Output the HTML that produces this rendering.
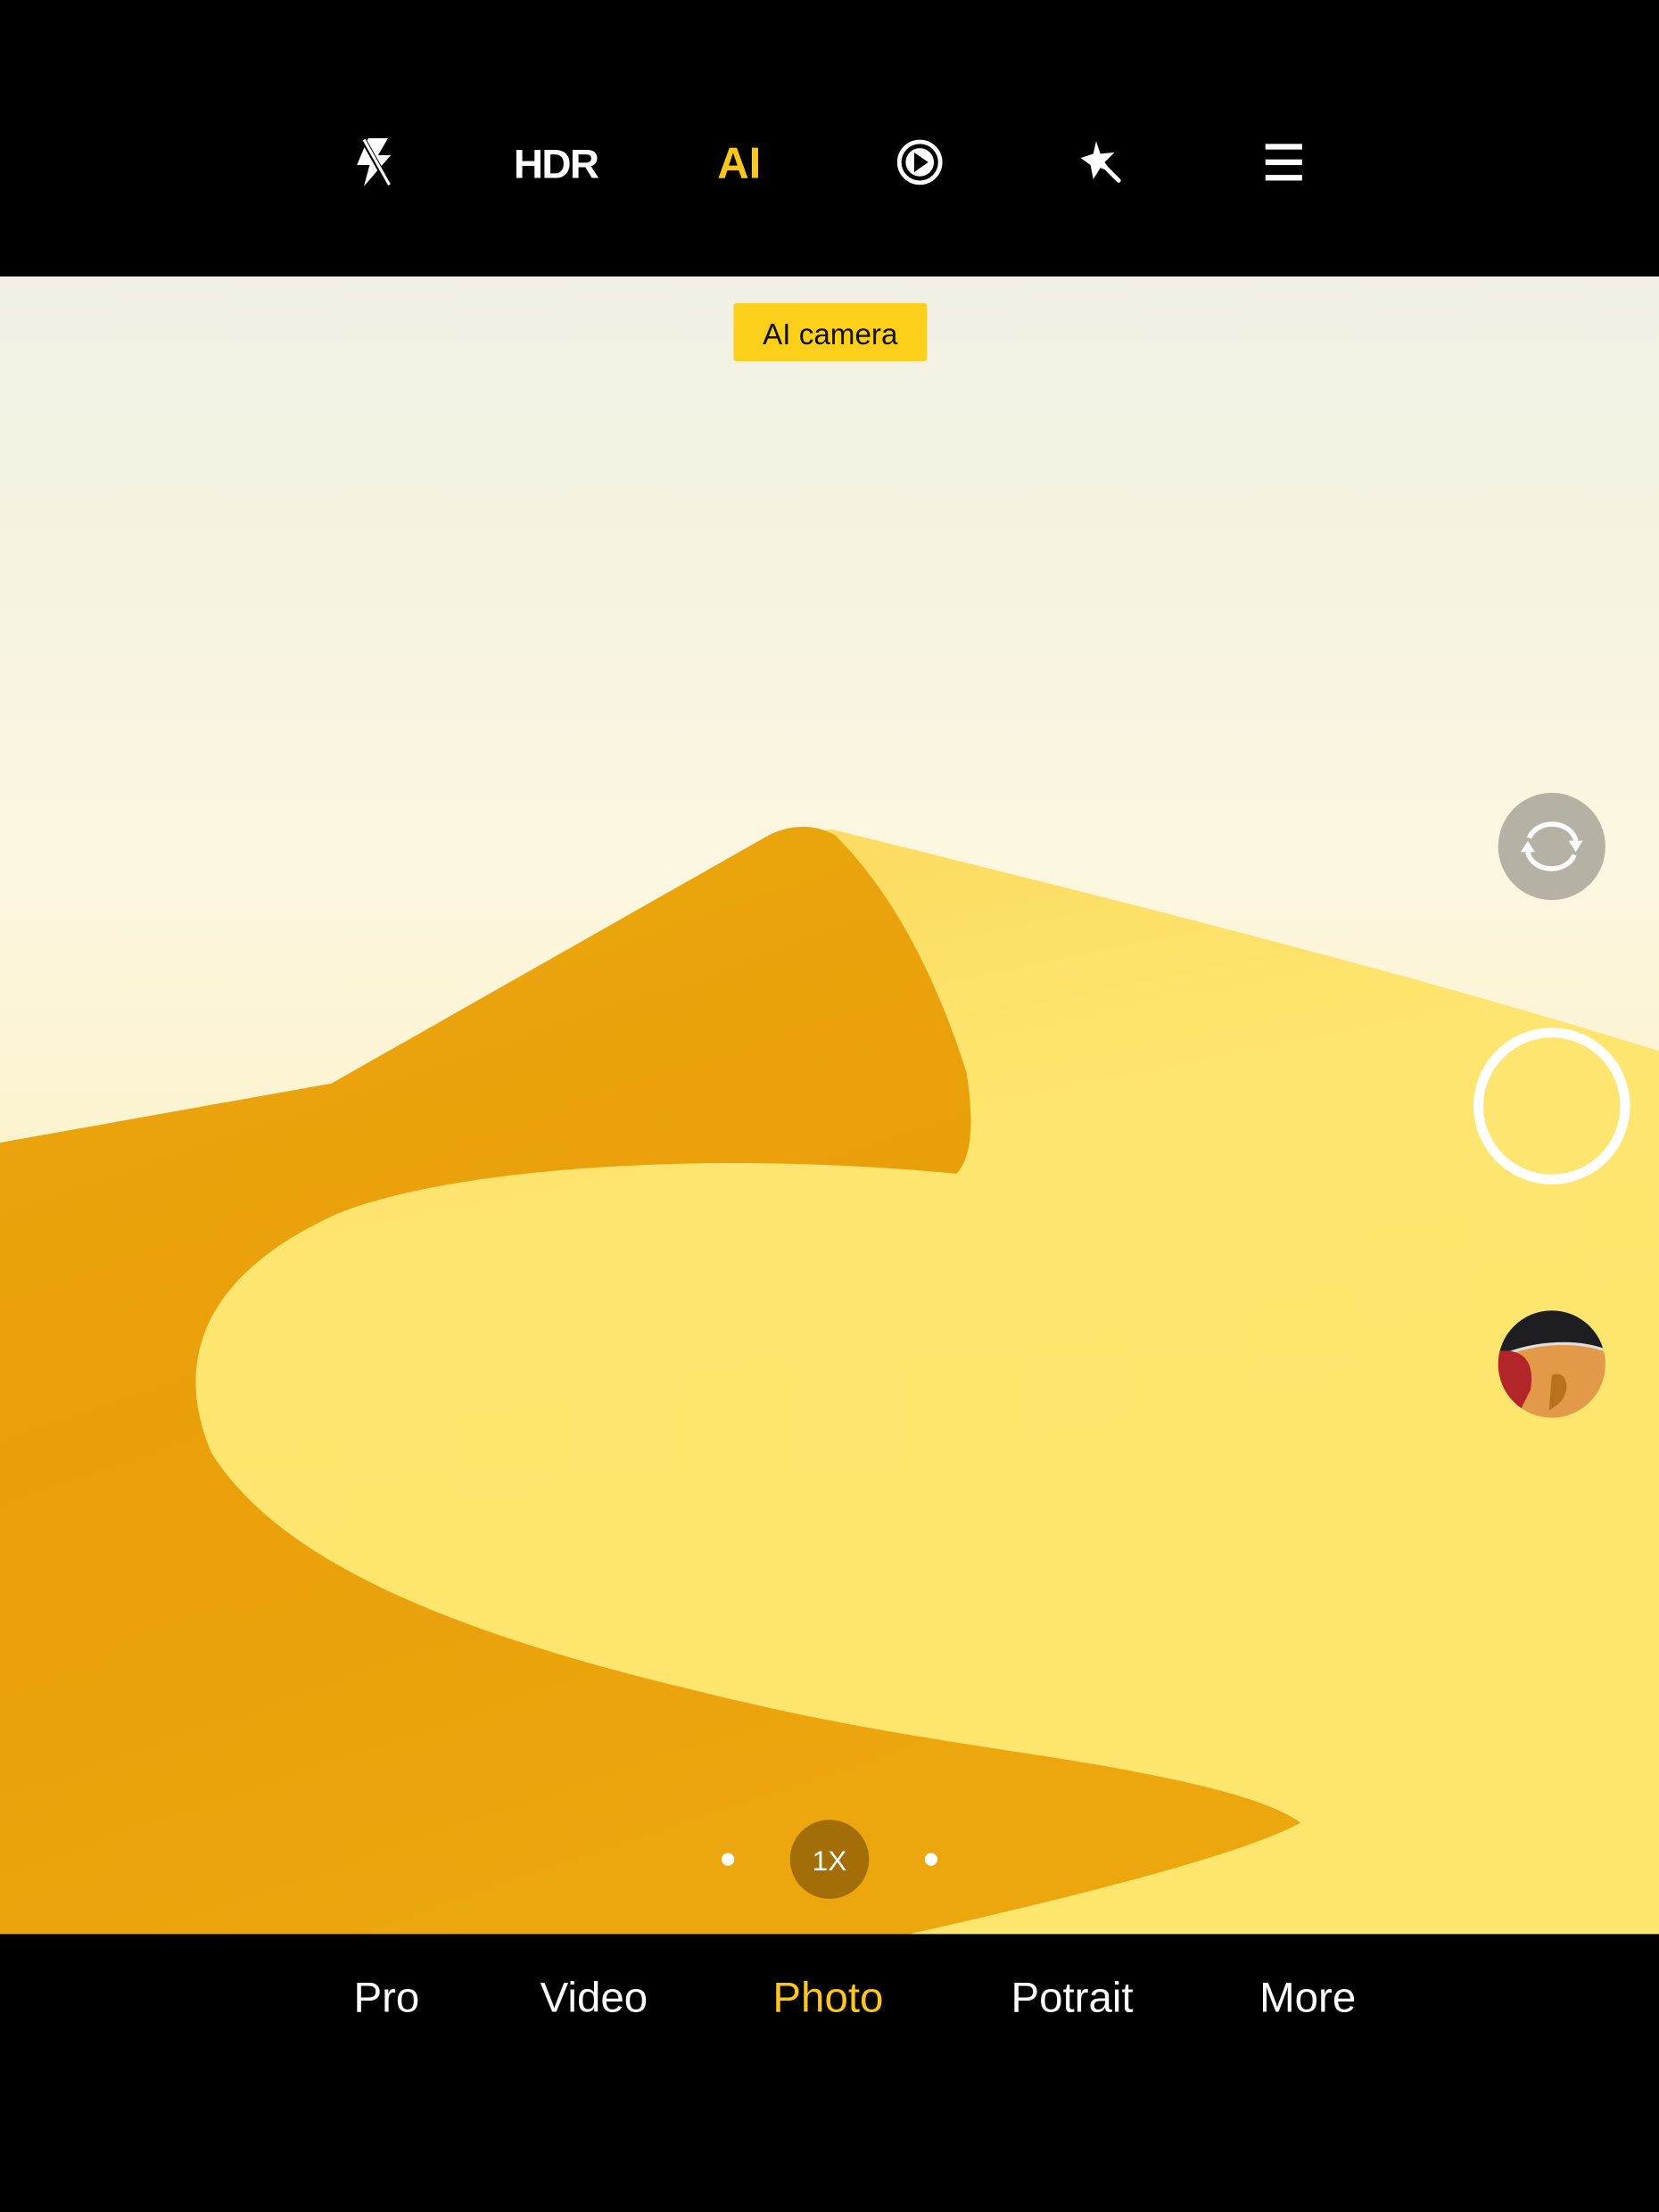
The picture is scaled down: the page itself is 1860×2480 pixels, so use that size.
<!DOCTYPE html>
<html><head><meta charset="utf-8"><style>
html,body{margin:0;padding:0;background:#000;width:1860px;height:2480px;overflow:hidden}
svg{display:block}
</style></head><body>
<svg width="1860" height="2480" viewBox="0 0 1176 1568" xmlns="http://www.w3.org/2000/svg">
<defs>
<linearGradient id="sky" x1="0" y1="0" x2="0" y2="1">
<stop offset="0" stop-color="#f1f0e4"/><stop offset="0.35" stop-color="#fbf6e0"/><stop offset="0.6" stop-color="#fdf2c6"/><stop offset="1" stop-color="#fde9a0"/></linearGradient>
<linearGradient id="ylw" x1="0" y1="0" x2="0.3" y2="1">
<stop offset="0" stop-color="#fad65a"/><stop offset="0.4" stop-color="#fee56f"/><stop offset="1" stop-color="#fde56e"/></linearGradient>
<linearGradient id="org" x1="0" y1="0" x2="0.4" y2="1">
<stop offset="0" stop-color="#eba80e"/><stop offset="0.5" stop-color="#e99f0a"/><stop offset="1" stop-color="#eca60e"/></linearGradient>
</defs>
<rect x="0" y="196" width="1176" height="1176" fill="url(#sky)"/>
<path d="M590,588 C800,640 1000,690 1176,745 L1176,1372 L0,1372 L0,810 L235,768 L545,592 Z" fill="url(#ylw)"/>
<path d="M0,810 L235,768 L545,592 Q570,580 592,592 Q650,650 685,760 Q694,815 678,832 C500,815 320,828 240,860 C150,900 120,960 150,1030 C200,1110 330,1160 500,1200 C620,1230 720,1240 800,1255 C870,1268 905,1280 922,1292 C880,1315 760,1345 640,1372 L0,1372 Z" fill="url(#org)"/>
<rect x="0" y="1371" width="1176" height="197" fill="#000"/>
<!-- top icons -->
<path d="M261,98 L253,117 L262,117 L258,132 L277,110 L268,110 L275,98 Z" fill="#fff"/>
<line x1="257" y1="98" x2="275" y2="130" stroke="#000" stroke-width="4"/>
<line x1="258" y1="99" x2="276" y2="131" stroke="#fff" stroke-width="2"/>
<text x="394" y="126" font-family="Liberation Sans,sans-serif" font-weight="bold" font-size="29" fill="#fff" text-anchor="middle" letter-spacing="-1">HDR</text>
<text x="524" y="126" font-family="Liberation Sans,sans-serif" font-weight="bold" font-size="31" fill="#fcc61b" text-anchor="middle">AI</text>
<circle cx="652" cy="115" r="14.5" fill="none" stroke="#fff" stroke-width="3"/>
<circle cx="652" cy="115" r="10" fill="#fff"/>
<path d="M648,108 L658,115 L648,122 Z" fill="#000"/>
<path d="M777,100 L780,109 L790,108 L783,115 L788,122 L780,119 L775,127 L773,117 L766,112 L775,109 Z" fill="#fff"/>
<line x1="784" y1="119" x2="793" y2="128" stroke="#fff" stroke-width="3" stroke-linecap="round"/>
<g fill="#fff"><rect x="897" y="102" width="26" height="4"/><rect x="897" y="113" width="26" height="4"/><rect x="897" y="124" width="26" height="4"/></g>
<!-- AI camera tag -->
<rect x="520" y="215" width="137" height="41" rx="2" fill="#fccf1b"/>
<text x="588.5" y="244" font-family="Liberation Sans,sans-serif" font-size="21" fill="#111" text-anchor="middle">AI camera</text>
<!-- right controls -->
<circle cx="1100" cy="600" r="38" fill="#b5b1a4"/>
<path d="M1084,594 A17,14 0 0 1 1117,596" fill="none" stroke="#fff" stroke-width="3.5"/>
<path d="M1116,606 A17,14 0 0 1 1083,604" fill="none" stroke="#fff" stroke-width="3.5"/>
<path d="M1112,596 L1122,596 L1117,604 Z" fill="#fff"/>
<path d="M1078,604 L1088,604 L1083,596 Z" fill="#fff"/>
<circle cx="1100" cy="784" r="52" fill="none" stroke="#fff" stroke-width="7"/>
<clipPath id="th"><circle cx="1100" cy="967" r="38"/></clipPath>
<g clip-path="url(#th)">
<rect x="1060" y="925" width="80" height="85" fill="#e29a48"/>
<path d="M1060,925 L1140,925 L1140,958 C1120,950 1090,950 1062,962 Z" fill="#1d1d22"/>
<path d="M1062,962 C1090,950 1120,950 1140,958" fill="none" stroke="#ddd" stroke-width="2"/>
<path d="M1060,958 C1080,955 1088,965 1085,985 L1075,1005 L1060,1005 Z" fill="#b2262a"/>
<path d="M1100,975 C1110,970 1115,985 1105,995 L1098,1000 Z" fill="#b8721f"/>
</g>
<!-- zoom -->
<circle cx="516" cy="1318" r="4.5" fill="#fff"/>
<circle cx="660" cy="1318" r="4.5" fill="#fff"/>
<circle cx="588" cy="1318" r="28" fill="#a36e07"/>
<text x="588" y="1326" font-family="Liberation Sans,sans-serif" font-size="20" fill="#fff" text-anchor="middle">1X</text>
<!-- modes -->
<g font-family="Liberation Sans,sans-serif" font-size="30" text-anchor="middle" fill="#fff">
<text x="274" y="1426">Pro</text>
<text x="421" y="1426">Video</text>
<text x="587" y="1426" fill="#fcc61b">Photo</text>
<text x="760" y="1426">Potrait</text>
<text x="927" y="1426">More</text>
</g>
</svg>
</body></html>
